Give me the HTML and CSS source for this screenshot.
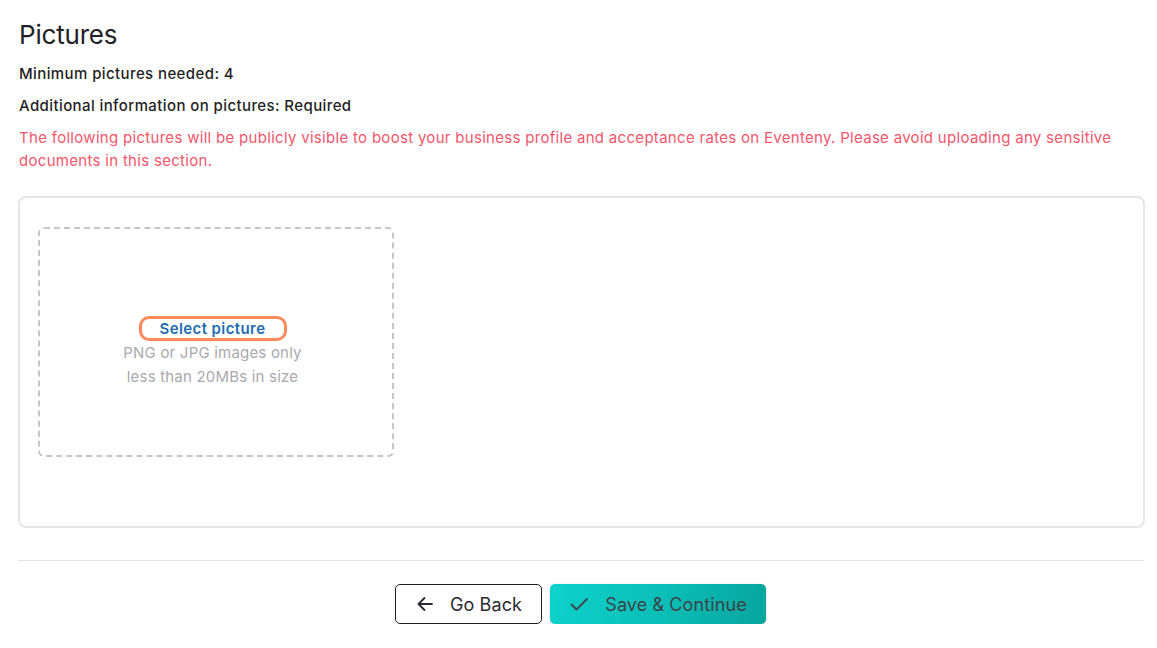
FILE: index.html
```html
<!DOCTYPE html>
<html lang="en">
<head>
<meta charset="utf-8">
<title>Pictures</title>
<link rel="stylesheet" href="styles.css">
</head>
<body>
<main class="page">
  <h1 class="title">Pictures</h1>
  <p class="meta">Minimum pictures needed: 4</p>
  <p class="meta">Additional information on pictures: Required</p>
  <p class="warning">The following pictures will be publicly visible to boost your business profile and acceptance rates on Eventeny. Please avoid uploading any sensitive documents in this section.</p>

  <section class="card">
    <div class="dropzone">
      <button class="select-link" type="button">Select picture</button>
      <span class="hint">PNG or JPG images only</span>
      <span class="hint">less than 20MBs in size</span>
    </div>
  </section>

  <hr class="divider">

  <div class="actions">
    <button class="btn btn-back" type="button">
      <svg class="icon" width="20" height="20" viewBox="0 0 20 20" fill="none" stroke="currentColor" stroke-width="1.8" stroke-linecap="round" stroke-linejoin="round"><path d="M17 10H3.5M9.5 4L3.5 10l6 6"/></svg>
      <span>Go Back</span>
    </button>
    <button class="btn btn-save" type="button">
      <svg class="icon" width="20" height="20" viewBox="0 0 20 20" fill="none" stroke="currentColor" stroke-width="1.8" stroke-linecap="round" stroke-linejoin="round"><path d="M2.5 10.5l5 5L18 5"/></svg>
      <span>Save &amp; Continue</span>
    </button>
  </div>
</main>
</body>
</html>
```

FILE: styles.css
```css
* { box-sizing: border-box; }

body {
  margin: 0;
  background: #ffffff;
  font-family: Inter, "Noto Sans", "Liberation Sans", sans-serif;
  color: #1f1f24;
}

.page {
  padding: 17px 12px 0 18px;
}

.title {
  margin: 0 0 0 1px;
  font-size: 26px;
  font-weight: 400;
  line-height: 36px;
  letter-spacing: -0.2px;
  color: #222226;
}

.meta {
  margin: 9px 0 0 1px;
  font-size: 15px;
  font-weight: 500;
  line-height: 24px;
  letter-spacing: 0.4px;
  color: #1f1f24;
}

.meta + .meta {
  margin-top: 8px;
}

.warning {
  margin: 8px 0 0 1px;
  font-size: 15px;
  font-weight: 400;
  line-height: 23px;
  letter-spacing: 0.3px;
  color: #f5566a;
  max-width: 1110px;
}

.card {
  margin-top: 24px;
  height: 332px;
  border: 2px solid #e6e6e6;
  border-radius: 8px;
  padding: 29px 18px;
}

.dropzone {
  width: 356px;
  height: 230px;
  border: 2px dashed #c6c6c9;
  border-radius: 6px;
  display: flex;
  flex-direction: column;
  align-items: center;
  justify-content: center;
  padding: 20px 7px 0 0;
}

.select-link {
  font-family: inherit;
  font-size: 15px;
  font-weight: 600;
  letter-spacing: 0.4px;
  color: #1d6db3;
  background: #fff;
  border: 3px solid #ff8a5c;
  border-radius: 10px;
  width: 148px;
  height: 25px;
  padding: 0;
  line-height: 19px;
}

.hint {
  font-size: 15px;
  line-height: 24px;
  letter-spacing: 0.2px;
  color: #a9a9ad;
}

.divider {
  margin: 32px 1px 0 0;
  border: 0;
  border-top: 1px solid #e2e2e2;
}

.actions {
  display: flex;
  justify-content: center;
  gap: 8px;
  margin-top: 23px;
  padding-right: 2px;
}

.btn {
  font-family: inherit;
  display: flex;
  align-items: center;
  justify-content: center;
  gap: 15px;
  height: 40px;
  border-radius: 5px;
  font-size: 18px;
  font-weight: 400;
  letter-spacing: 0.1px;
  cursor: pointer;
}

.btn-back {
  width: 147px;
  background: #fff;
  border: 1px solid #1e1e22;
  color: #2a2a30;
}

.btn-save {
  width: 216px;
  border: 0;
  color: #3d4446;
  background: linear-gradient(100deg, #0dd2cb 0%, #0bbdb6 55%, #07a59e 100%);
  box-shadow: 0 1px 3px rgba(0, 0, 0, 0.18);
  gap: 16px;
}

.icon {
  flex: none;
}
```
